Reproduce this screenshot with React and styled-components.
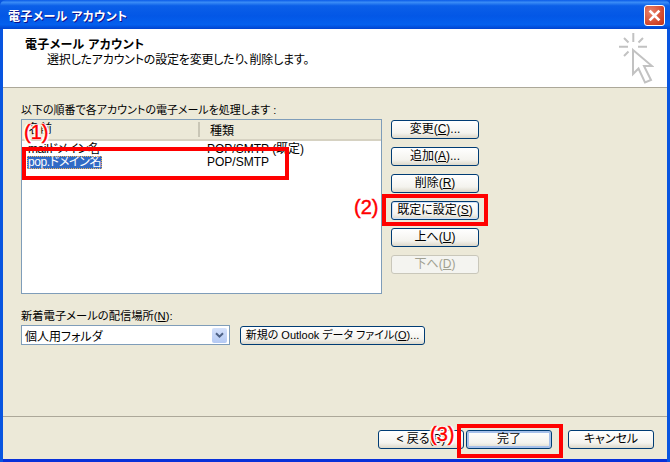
import React from 'react';
import styled, { createGlobalStyle, css } from 'styled-components';

const GlobalStyle = createGlobalStyle`
  html, body {
    margin: 0;
    padding: 0;
    background: #ece9d8;
  }
  body {
    font-family: "Liberation Sans", "Noto Sans CJK JP", sans-serif;
    font-size: 12px;
    font-feature-settings: "palt";
    color: #000;
  }
`;

const sideButtons = [
  { label: '変更', key: 'C', tail: '...' },
  { label: '追加', key: 'A', tail: '...' },
  { label: '削除', key: 'R' },
  { label: '既定に設定', key: 'S', focused: true },
  { label: '上へ', key: 'U' },
  { label: '下へ', key: 'D', disabled: true }
];

const accounts = [
  { name: 'mailドメイン名', type: 'POP/SMTP (既定)' },
  { name: 'pop.ドメイン名', type: 'POP/SMTP', selected: true }
];

const CursorIcon = () => (
  <svg width="36" height="54" viewBox="0 0 36 54" fill="none" stroke="#c2c2c2" strokeWidth="2">
    <path d="M15.3 3v9M1 16.7h9M20 16.7h9M6 8l4.5 4.5M25 8l-4.5 4.5M6 26l4.5-4.5" />
    <path
      d="M15 20 34 36H26L33 50 27 52.5 20.5 38.5 15 44Z"
      fill="#fff"
      strokeLinejoin="miter"
    />
  </svg>
);

const App = () => (
  <Window>
    <GlobalStyle />
    <TitleBar>
      <TitleText>電子メール アカウント</TitleText>
      <CloseButton>
        <svg width="13" height="13" viewBox="0 0 12 12">
          <path d="M1.5 1.5l9 9M10.5 1.5l-9 9" stroke="#fff" strokeWidth="2.6" />
        </svg>
      </CloseButton>
    </TitleBar>
    <Frame>
      <Header>
        <HeaderText>
          <HeaderTitle>電子メール アカウント</HeaderTitle>
          <HeaderSub>選択したアカウントの設定を変更したり、削除します。</HeaderSub>
        </HeaderText>
        <HeaderIcon>
          <CursorIcon />
        </HeaderIcon>
      </Header>
      <Body>
        <Label>以下の順番で各アカウントの電子メールを処理します :</Label>
        <ListRow>
          <List>
            <ListHead>
              <NameHead>名前</NameHead>
              <TypeHead>種類</TypeHead>
            </ListHead>
            {accounts.map(a => (
              <ListItem key={a.name}>
                <NameCell>
                  <NameText $selected={a.selected}>{a.name}</NameText>
                </NameCell>
                <span>{a.type}</span>
              </ListItem>
            ))}
          </List>
          <SideButtons>
            {sideButtons.map(b => (
              <Button key={b.key} $width={88} $state={b.focused ? 'focus' : b.disabled ? 'disabled' : null}>
                {b.label}(<u>{b.key}</u>){b.tail}
              </Button>
            ))}
          </SideButtons>
        </ListRow>
        <DeliveryLabel>新着電子メールの配信場所(<u>N</u>):</DeliveryLabel>
        <DeliveryRow>
          <Combo>
            <span>個人用フォルダ</span>
            <ComboArrow>
              <svg width="9" height="7" viewBox="0 0 9 7">
                <path d="M1 1.2l3.5 3.5L8 1.2" fill="none" stroke="#4d6185" strokeWidth="2" />
              </svg>
            </ComboArrow>
          </Combo>
          <Button $width={185} $small>
            新規の Outlook データ ファイル(<u>O</u>)...
          </Button>
        </DeliveryRow>
      </Body>
      <Footer>
        <Button $width={86}>&lt; 戻る(B)</Button>
        <Button $width={86} $state="default">完了</Button>
        <CancelGap />
        <Button $width={86}>キャンセル</Button>
      </Footer>
    </Frame>

    <RedBox $x={22} $y={147} $w={267} $h={33} />
    <RedBox $x={382} $y={194} $w={106} $h={32} />
    <RedBox $x={457} $y={424} $w={106} $h={34} />
    <Callout $x={24} $y={121}>(1)</Callout>
    <Callout $x={354} $y={196}>(2)</Callout>
    <Callout $x={430} $y={423}>(3)</Callout>
  </Window>
);

const Window = styled.div`
  position: relative;
  width: 670px;
  height: 462px;
  display: flex;
  flex-direction: column;
  overflow: hidden;
  background: #0855e0;
`;

const TitleBar = styled.div`
  height: 29px;
  flex: none;
  box-sizing: border-box;
  display: flex;
  align-items: center;
  justify-content: space-between;
  padding: 2px 5px 0 8px;
  background: linear-gradient(
    to bottom,
    #0a5be8 0%,
    #3a8cf6 8%,
    #0b5fe8 20%,
    #0357e6 55%,
    #0460ee 85%,
    #0043cf 100%
  );
  border-radius: 6px 6px 0 0;
`;

const TitleText = styled.div`
  color: #fff;
  font-weight: 700;
  font-size: 12px;
  letter-spacing: 0.3px;
  text-shadow: 1px 1px 0 #0f1089;
`;

const CloseButton = styled.div`
  width: 21px;
  height: 21px;
  box-sizing: border-box;
  display: flex;
  align-items: center;
  justify-content: center;
  border: 1px solid #fff;
  border-radius: 3px;
  background: radial-gradient(circle at 30% 30%, #e8826a, #d2452a 70%, #b93318);
`;

const Frame = styled.div`
  flex: 1;
  display: flex;
  flex-direction: column;
  margin: 0 3px;
  background: #ece9d8;
  border-bottom: 3px solid #0831d9;
`;

const Header = styled.div`
  height: 59px;
  flex: none;
  box-sizing: border-box;
  display: flex;
  justify-content: space-between;
  background: #fff;
  border-bottom: 1px solid #aca899;
`;

const HeaderText = styled.div`
  padding: 9px 0 0 22px;
`;

const HeaderTitle = styled.div`
  font-weight: 700;
  line-height: 15px;
  letter-spacing: 0.3px;
`;

const HeaderSub = styled.div`
  margin-left: 22px;
  line-height: 15px;
  letter-spacing: -0.2px;
`;

const HeaderIcon = styled.div`
  padding: 1px 13px 0 0;
`;

const Body = styled.div`
  flex: 1;
  display: flex;
  flex-direction: column;
  padding: 14px 0 0 18px;
`;

const Label = styled.div`
  font-size: 11px;
  line-height: 16px;
  margin-bottom: 1px;
`;

const ListRow = styled.div`
  display: flex;
  gap: 9px;
`;

const List = styled.div`
  width: 361px;
  height: 175px;
  box-sizing: border-box;
  border: 1px solid #7f9db9;
  background: #fff;
`;

const ListHead = styled.div`
  height: 21px;
  display: flex;
  align-items: center;
  background: #ece9d8;
  border-bottom: 2px solid #d6d2c2;
  box-sizing: border-box;
  margin-bottom: 2px;
`;

const NameHead = styled.div`
  width: 178px;
  padding-left: 6px;
  box-sizing: border-box;
  border-right: 2px solid #c9c6b6;
  line-height: 15px;
`;

const TypeHead = styled.div`
  padding-left: 10px;
`;

const ListItem = styled.div`
  display: flex;
  height: 13px;
  line-height: 13px;
`;

const NameCell = styled.div`
  width: 185px;
  padding-left: 5px;
  box-sizing: border-box;
`;

const NameText = styled.span`
  display: inline-block;
  padding: 0 1px;
  letter-spacing: -0.4px;
  ${props =>
    props.$selected &&
    css`
      background: #316ac5;
      color: #fff;
      outline: 1px dotted #e8b25a;
      outline-offset: -1px;
    `}
`;

const SideButtons = styled.div`
  display: flex;
  flex-direction: column;
  gap: 8px;
  padding-top: 1px;
`;

const Button = styled.div`
  width: ${props => props.$width}px;
  height: 19px;
  flex: none;
  box-sizing: border-box;
  display: flex;
  align-items: center;
  justify-content: center;
  white-space: pre;
  font-size: ${props => (props.$small ? 11 : 12)}px;
  line-height: 17px;
  border: 1px solid #003c74;
  border-radius: 3px;
  background: linear-gradient(to bottom, #fff 0%, #f4f3ee 70%, #dcd8ca 100%);
  ${props =>
    props.$state === 'focus' &&
    css`
      box-shadow: inset 0 0 0 1px #cfe0f8;
    `}
  ${props =>
    props.$state === 'default' &&
    css`
      box-shadow: inset 0 0 0 2px #a6c0ea;
    `}
  ${props =>
    props.$state === 'disabled' &&
    css`
      border-color: #c9c7ba;
      background: #f4f4f0;
      color: #a1a192;
    `}
`;

const DeliveryLabel = styled.div`
  font-size: 11.3px;
  margin-top: 14px;
  line-height: 16px;
`;

const DeliveryRow = styled.div`
  display: flex;
  align-items: center;
  gap: 10px;
  margin-top: 1px;
`;

const Combo = styled.div`
  width: 209px;
  height: 20px;
  box-sizing: border-box;
  display: flex;
  align-items: center;
  justify-content: space-between;
  padding: 0 2px 0 3px;
  border: 1px solid #7f9db9;
  background: #fff;
`;

const ComboArrow = styled.div`
  width: 15px;
  height: 15px;
  display: flex;
  align-items: center;
  justify-content: center;
  border-radius: 2px;
  background: linear-gradient(to bottom, #d4e1fb, #b4c9f3);
`;

const Footer = styled.div`
  height: 43px;
  flex: none;
  box-sizing: border-box;
  display: flex;
  justify-content: flex-end;
  gap: 2px;
  padding: 13px 13px 0 0;
  border-top: 1px solid #aca899;
`;

const CancelGap = styled.div`
  width: 12px;
`;

const RedBox = styled.div`
  position: absolute;
  left: ${props => props.$x}px;
  top: ${props => props.$y}px;
  width: ${props => props.$w}px;
  height: ${props => props.$h}px;
  box-sizing: border-box;
  border: 4px solid #f00;
`;

const Callout = styled.div`
  position: absolute;
  left: ${props => props.$x}px;
  top: ${props => props.$y}px;
  font-size: 20px;
  line-height: 22px;
  color: #f00;
  -webkit-text-stroke: 0.4px #f00;
  text-shadow: 1px 0 0 #fff, -1px 0 0 #fff, 0 1px 0 #fff, 0 -1px 0 #fff, 2px 0 1px #fff, -2px 0 1px #fff;
`;

export default App;
